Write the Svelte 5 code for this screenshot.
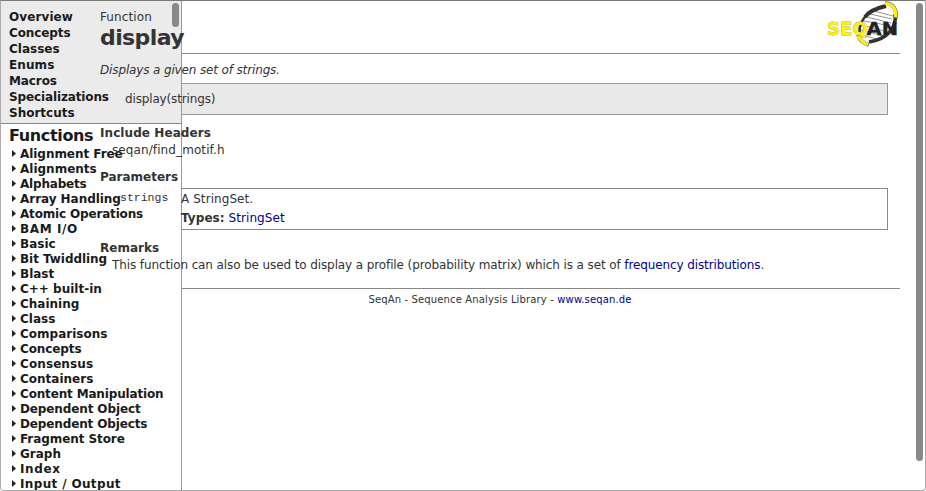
<script>
  const pages = [
    ['Overview', 0.1], ['Concepts', -0.1], ['Classes', 0], ['Enums', 0.1],
    ['Macros', -0.1], ['Specializations', -0.13], ['Shortcuts', 0]
  ];
  // Each group name is paired with its letter spacing in pixels.
  const functions = [
    ['Alignment Free', -0.05], ['Alignments', 0], ['Alphabets', -0.2], ['Array Handling', -0.04],
    ['Atomic Operations', -0.17], ['BAM I/O', 0.6], ['Basic', 0], ['Bit Twiddling', -0.05],
    ['Blast', 0], ['C++ built-in', 0], ['Chaining', 0], ['Class', 0], ['Comparisons', 0],
    ['Concepts', -0.1], ['Consensus', 0.1], ['Containers', 0], ['Content Manipulation', -0.16],
    ['Dependent Object', -0.12], ['Dependent Objects', -0.13], ['Fragment Store', -0.08],
    ['Graph', 0], ['Index', 0.6], ['Input / Output', 0.35]
  ];
</script>

<div class="window">
  <aside>
    <nav>
      {#each pages as [page, tracking]}<a href="#top" style="letter-spacing: {tracking}px">{page}</a>{/each}
    </nav>
    <section class="tree">
      <h2>Functions</h2>
      <ul>
        {#each functions as [name, tracking]}
          <li>
            <svg width="4" height="7" viewBox="0 0 4 7"><path d="M0 0L4 3.5L0 7Z" fill="#222" /></svg>
            <span style="letter-spacing: {tracking}px">{name}</span>
          </li>
        {/each}
      </ul>
    </section>
    <div class="thumb small"></div>
  </aside>

  <main>
    <header>
      <div>
        <p class="kind"><span>Function</span></p>
        <h1><span>display</span></h1>
      </div>
      <svg class="logo" width="72" height="48" viewBox="0 0 72 48">
        <g fill="none">
          <path d="M47 10L66 15M43 13L65 18M40 16L64 22M37 20L59 24M35 24L57 30M34 29L56 35M35 34L53 39" stroke="#888" stroke-width=".9" />
          <path d="M33 34C31 25 36 9 59 5" stroke="#333" stroke-width="2.6" />
          <path d="M38 16C42 10 50 7 59 5" stroke="#333" stroke-width="4" />
          <path d="M68 13C70 26 61 38 42 41" stroke="#333" stroke-width="3.6" />
          <path d="M58 2C66 2.5 70 8 69 17M31 34C33 41 38 42 42 44" stroke="#888" stroke-width="4" />
          <path d="M58 2.5C66 3 69.5 8 68.5 16M31 35C34 41 38 42 41 43.5" stroke="#fff200" stroke-width="3" />
        </g>
        <g font-family="DejaVu Sans, sans-serif" font-weight="bold" font-size="18.5">
          <text x="0" y="33.5" textLength="41" lengthAdjust="spacingAndGlyphs" fill="#fff200" stroke="#aaa" stroke-width=".8" paint-order="stroke">SEQ</text>
          <text x="39.5" y="33.5" textLength="31.5" lengthAdjust="spacingAndGlyphs" fill="#222" stroke="#222" stroke-width=".4">AN</text>
        </g>
      </svg>
    </header>

    <p class="summary"><span>Displays a given set of strings.</span></p>
    <div class="signature"><span>display(strings)</span></div>

    <h3 class="include"><span>Include Headers</span></h3>
    <p class="indent file"><span>seqan/find_motif.h</span></p>

    <h3 class="params"><span>Parameters</span></h3>
    <div class="table">
      <code><span>strings</span></code>
      <div>
        <p><span>A StringSet.</span></p>
        <p><span><b>Types:</b> <a href="#stringset">StringSet</a></span></p>
      </div>
    </div>

    <h3 class="remarks"><span>Remarks</span></h3>
    <p class="indent note"><span>This function can also be used to display a profile (probability matrix) which is a set of <a href="#fd">frequency distributions</a>.</span></p>

    <footer>SeqAn - Sequence Analysis Library - <a href="#seqan">www.seqan.de</a></footer>
  </main>
  <div class="thumb large"></div>
</div>

<style>
  .window {
    box-sizing: border-box;
    position: relative;
    display: grid;
    grid-template-columns: 181px 1fr;
    width: 926px;
    height: 491px;
    overflow: hidden;
    border: 1px solid #aaa;
    border-top-color: #777;
    border-radius: 0 0 4px 4px;
    background: #fff;
    color: #333;
    font: 12px/16px Verdana, "DejaVu Sans", sans-serif;
  }
  :global(body) { background: #fff; }
  h1, h2, h3, p, ul { margin: 0; padding: 0; }
  a { color: #00008b; text-decoration: none; }
  aside {
    box-sizing: border-box;
    grid-area: 1 / 1;
    position: relative;
    z-index: 1;
    height: 489px;
    overflow: hidden;
    border-right: 1px solid #999;
    background: #fff;
    color: #1a1a1a;
    font-weight: bold;
  }
  nav {
    box-sizing: border-box;
    display: flex;
    flex-direction: column;
    height: 123px;
    padding: 8px;
    background: #ebebeb;
    border-bottom: 1px solid #888;
  }
  nav a { color: #1a1a1a; }
  .tree { padding: 2px 0 0 8px; }
  h2 { font-size: 16px; line-height: 20px; letter-spacing: -0.35px; }
  ul { padding-top: 1px; list-style: none; }
  li {
    display: flex;
    align-items: center;
    gap: 4px;
    height: 15px;
    padding-left: 3px;
    line-height: 15px;
    white-space: nowrap;
  }
  li svg { margin-bottom: 2px; }
  .thumb {
    position: absolute;
    background: #888;
    border-radius: 4px;
  }
  .small { top: 2px; right: 2px; width: 7px; height: 24px; }
  .large { top: 2px; right: 2px; width: 7px; height: 458px; }
  main {
    grid-area: 1 / 1 / 2 / 3;
    padding: 0 25px 0 99px;
    min-width: 0;
  }
  main span { position: relative; z-index: 2; }
  header {
    box-sizing: border-box;
    display: flex;
    justify-content: space-between;
    height: 53px;
    padding-top: 8px;
    border-bottom: 1px solid #888;
  }
  .kind { letter-spacing: 0.1px; }
  h1 { font-size: 22px; line-height: 25px; letter-spacing: -0.6px; }
  .logo { margin: -8px 1px 0 0; }
  .summary { margin-top: 8px; font-style: italic; letter-spacing: -0.14px; }
  .signature {
    box-sizing: border-box;
    height: 32px;
    margin: 5px 12px 0 12px;
    padding: 7px 12px;
    border: 1px solid #999;
    background: #e9e9e9;
    letter-spacing: -0.15px;
  }
  h3 { font-size: 12px; line-height: 16px; }
  .include { margin-top: 10px; letter-spacing: 0.08px; }
  .indent { margin: 1px 0 0 12px; white-space: nowrap; }
  .file { letter-spacing: 0.1px; }
  .note { letter-spacing: -0.11px; }
  .params { margin-top: 11px; }
  .table {
    box-sizing: border-box;
    display: grid;
    grid-template-columns: 61px 1fr;
    height: 42px;
    margin: 3px 12px 0 12px;
    padding: 0 0 0 7px;
    border: 1px solid #888;
    letter-spacing: 0.07px;
  }
  .table code { padding-top: 1px; font: 11.5px/16px "Liberation Mono", monospace; letter-spacing: 0; }
  .table p { padding-top: 2px; line-height: 17px; }
  .remarks { margin-top: 10px; }
  footer {
    margin-top: 15px;
    padding-top: 3px;
    border-top: 1px solid #888;
    text-align: center;
    font-size: 10px;
    line-height: 15px;
    letter-spacing: 0.14px;
  }
</style>
